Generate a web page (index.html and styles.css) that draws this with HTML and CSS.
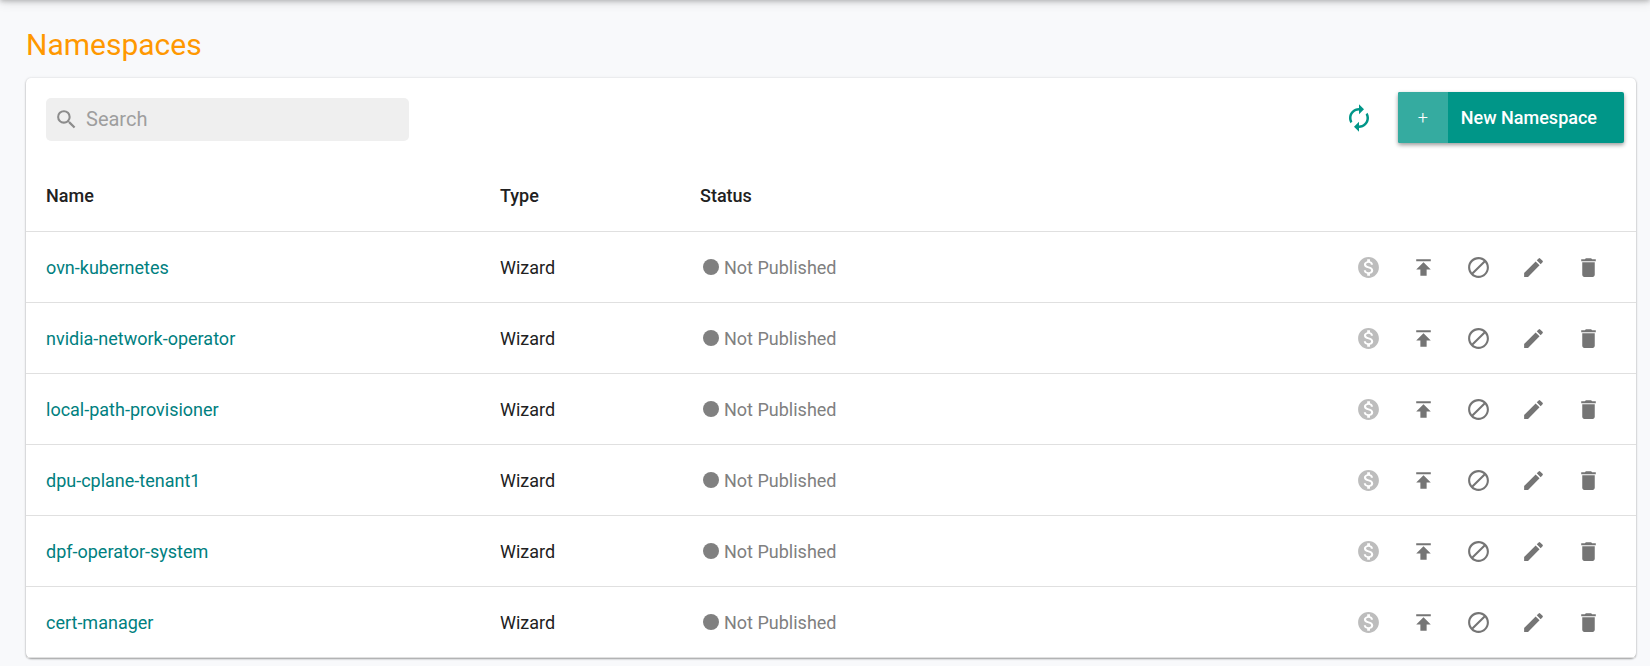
FILE: index.html
```html
<!DOCTYPE html>
<html lang="en">
<head>
<meta charset="utf-8">
<title>Namespaces</title>
<link rel="stylesheet" href="styles.css">
</head>
<body>
<svg class="sprite" aria-hidden="true">
  <symbol id="search" viewBox="0 0 24 24"><path d="M15.5 14h-.79l-.28-.27A6.471 6.471 0 0 0 16 9.500 6.500 6.500 0 1 0 9.500 16c1.610 0 3.090-.59 4.230-1.570l.27.28v.79l5 4.990L20.490 19l-4.990-5zm-6 0C7.010 14 5 11.990 5 9.500S7.010 5 9.500 5 14 7.010 14 9.500 11.990 14 9.500 14z"/></symbol>
  <symbol id="renew" viewBox="0 0 24 24"><path d="M12 6v3l4-4-4-4v3c-4.420 0-8 3.580-8 8 0 1.570.46 3.030 1.240 4.260L6.700 14.800A5.870 5.870 0 0 1 6 12c0-3.310 2.690-6 6-6zm6.760 1.740L17.300 9.200c.44.84.7 1.790.7 2.800 0 3.310-2.690 6-6 6v-3l-4 4 4 4v-3c4.420 0 8-3.580 8-8 0-1.570-.46-3.030-1.240-4.260z"/></symbol>
  <symbol id="cost" viewBox="0 0 24 24"><path d="M12 2C6.480 2 2 6.480 2 12s4.480 10 10 10 10-4.480 10-10S17.520 2 12 2zm1.410 16.090V20h-2.670v-1.930c-1.710-.36-3.160-1.460-3.270-3.400h1.960c.1 1.050.82 1.870 2.650 1.870 1.960 0 2.400-.98 2.400-1.590 0-.83-.44-1.610-2.670-2.140-2.480-.6-4.180-1.620-4.180-3.670 0-1.720 1.390-2.840 3.110-3.210V4h2.670v1.950c1.860.45 2.790 1.860 2.850 3.390H14.300c-.05-1.110-.64-1.870-2.220-1.870-1.500 0-2.400.68-2.400 1.640 0 .84.65 1.390 2.670 1.910s4.180 1.390 4.180 3.910c-.01 1.830-1.380 2.830-3.120 3.160z"/></symbol>
  <symbol id="publish" viewBox="0 0 24 24"><path d="M5 4v2h14V4H5zm0 10h4v6h6v-6h4l-7-7-7 7z"/></symbol>
  <symbol id="block" viewBox="0 0 24 24"><path d="M12 2C6.480 2 2 6.480 2 12s4.480 10 10 10 10-4.480 10-10S17.520 2 12 2zm0 2c1.850 0 3.550.63 4.900 1.690L5.690 16.900A7.902 7.902 0 0 1 4 12c0-4.420 3.580-8 8-8zm0 16c-1.850 0-3.550-.63-4.900-1.690L18.310 7.100A7.902 7.902 0 0 1 20 12c0 4.420-3.580 8-8 8z"/></symbol>
  <symbol id="edit" viewBox="0 0 24 24"><path d="M3 17.250V21h3.750L17.810 9.940l-3.750-3.750L3 17.250zM20.710 7.040a.996.996 0 0 0 0-1.410l-2.340-2.340a.996.996 0 0 0-1.410 0l-1.830 1.830 3.750 3.750 1.830-1.830z"/></symbol>
  <symbol id="trash" viewBox="0 0 24 24"><path d="M6 19c0 1.100.9 2 2 2h8c1.100 0 2-.9 2-2V7H6v12zM19 4h-3.500l-1-1h-5l-1 1H5v2h14V4z"/></symbol>
</svg>
<div class="topbar-shadow"></div>
<main class="page">
  <h1 class="title">Namespaces</h1>
  <section class="card">
    <div class="toolbar">
      <label class="search">
        <svg class="icon"><use href="#search"/></svg>
        <input class="search-input" type="search" placeholder="Search" aria-label="Search">
      </label>
      <div class="toolbar-actions">
        <button class="refresh" type="button" aria-label="Refresh"><svg class="icon-large"><use href="#renew"/></svg></button>
        <button class="new-button" type="button"><span class="new-plus">+</span><span class="new-label">New Namespace</span></button>
      </div>
    </div>
    <table class="table">
      <thead>
        <tr><th class="col-name">Name</th><th class="col-type">Type</th><th class="col-status">Status</th><th class="col-actions" aria-label="Actions"></th></tr>
      </thead>
      <tbody id="rows"></tbody>
    </table>
  </section>
</main>
<script src="app.js"></script>
</body>
</html>
```
FILE: styles.css
```css
* {
  box-sizing: border-box;
}

body {
  margin: 0;
  background: #f8f9fb;
  color: #212121;
  font-family: Roboto, sans-serif;
  font-size: 18px;
  line-height: 24px;
}

button {
  border: 0;
  padding: 0;
  background: none;
  font: inherit;
  cursor: pointer;
}

.sprite {
  display: none;
}

.topbar-shadow {
  position: absolute;
  top: -10px;
  left: 0;
  right: 0;
  height: 10px;
  box-shadow: 0 1px 5px rgba(0, 0, 0, 0.25), 0 2px 12px rgba(0, 0, 0, 0.12);
}

.page {
  padding: 24px 14px 8px 26px;
}

.title {
  margin: 0 0 12px;
  color: #ff9800;
  font-size: 30px;
  font-weight: 400;
  line-height: 42px;
}

.card {
  background: #fff;
  border-radius: 5px;
  box-shadow: 0 1px 2px rgba(0, 0, 0, 0.35), 0 0 3px rgba(0, 0, 0, 0.1);
}

.toolbar {
  display: flex;
  align-items: center;
  justify-content: space-between;
  height: 83px;
  padding: 0 12px 0 20px;
}

.search {
  display: flex;
  align-items: center;
  gap: 7px;
  width: 363px;
  height: 43px;
  padding: 0 8px;
  border-radius: 5px;
  background: #efefef;
  color: #8c8c8c;
}

.search-input {
  flex: 1;
  min-width: 0;
  padding: 0 0 2px;
  border: 0;
  outline: 0;
  background: none;
  color: #212121;
  font: inherit;
  font-size: 20px;
}

.search-input::placeholder {
  color: #9e9e9e;
}

.icon,
.icon-large {
  display: block;
  flex: none;
  width: 25px;
  height: 25px;
  fill: currentColor;
}

.icon-large {
  width: 30px;
  height: 30px;
}

.toolbar-actions {
  display: flex;
  align-items: center;
  gap: 24px;
  padding-bottom: 4px;
}

.refresh {
  color: #009688;
}

.new-button {
  display: flex;
  height: 51px;
  overflow: hidden;
  border-radius: 2px;
  background: #009688;
  color: #fff;
  font-weight: 500;
  line-height: 51px;
  box-shadow: 0 2px 4px rgba(0, 0, 0, 0.4);
}

.new-plus {
  width: 50px;
  background: #35aba0;
  font-weight: 300;
}

.new-label {
  padding: 0 27px 0 13px;
}

.table {
  width: 100%;
  border-collapse: separate;
  border-spacing: 0;
  table-layout: fixed;
}

.table th,
.table td {
  height: 71px;
  padding: 0;
  border-bottom: 1px solid #e0e0e0;
  text-align: left;
  font-weight: 400;
}

.table td {
  line-height: 25px;
}

.table th {
  font-weight: 500;
}

.table .col-name {
  width: 474px;
  padding-left: 20px;
}

.table .col-type {
  width: 200px;
}

.link {
  color: #008080;
  text-decoration: none;
}

.status {
  display: flex;
  align-items: center;
  gap: 5px;
  padding-left: 3px;
  color: #808080;
}

.dot {
  width: 16px;
  height: 16px;
  border-radius: 50%;
  background: #808080;
}

.actions {
  display: flex;
  justify-content: flex-end;
  gap: 30px;
  padding-right: 35px;
}

.action {
  color: #757575;
}

.action:disabled {
  color: #bdbdbd;
  cursor: default;
}
```
FILE: app.js
```js
const names = [
  "ovn-kubernetes",
  "nvidia-network-operator",
  "local-path-provisioner",
  "dpu-cplane-tenant1",
  "dpf-operator-system",
  "cert-manager",
];

const actions = [
  { icon: "cost", label: "Cost", disabled: true },
  { icon: "publish", label: "Publish" },
  { icon: "block", label: "Unpublish" },
  { icon: "edit", label: "Edit" },
  { icon: "trash", label: "Delete" },
];

const buttons = actions
  .map((a) => `<button class="action" type="button" aria-label="${a.label}"${a.disabled ? " disabled" : ""}><svg class="icon"><use href="#${a.icon}"/></svg></button>`)
  .join("");

document.getElementById("rows").innerHTML = names
  .map((name) => `<tr>
    <td class="col-name"><a class="link" href="#">${name}</a></td>
    <td>Wizard</td>
    <td><div class="status"><span class="dot"></span>Not Published</div></td>
    <td><div class="actions">${buttons}</div></td>
  </tr>`)
  .join("");
```
